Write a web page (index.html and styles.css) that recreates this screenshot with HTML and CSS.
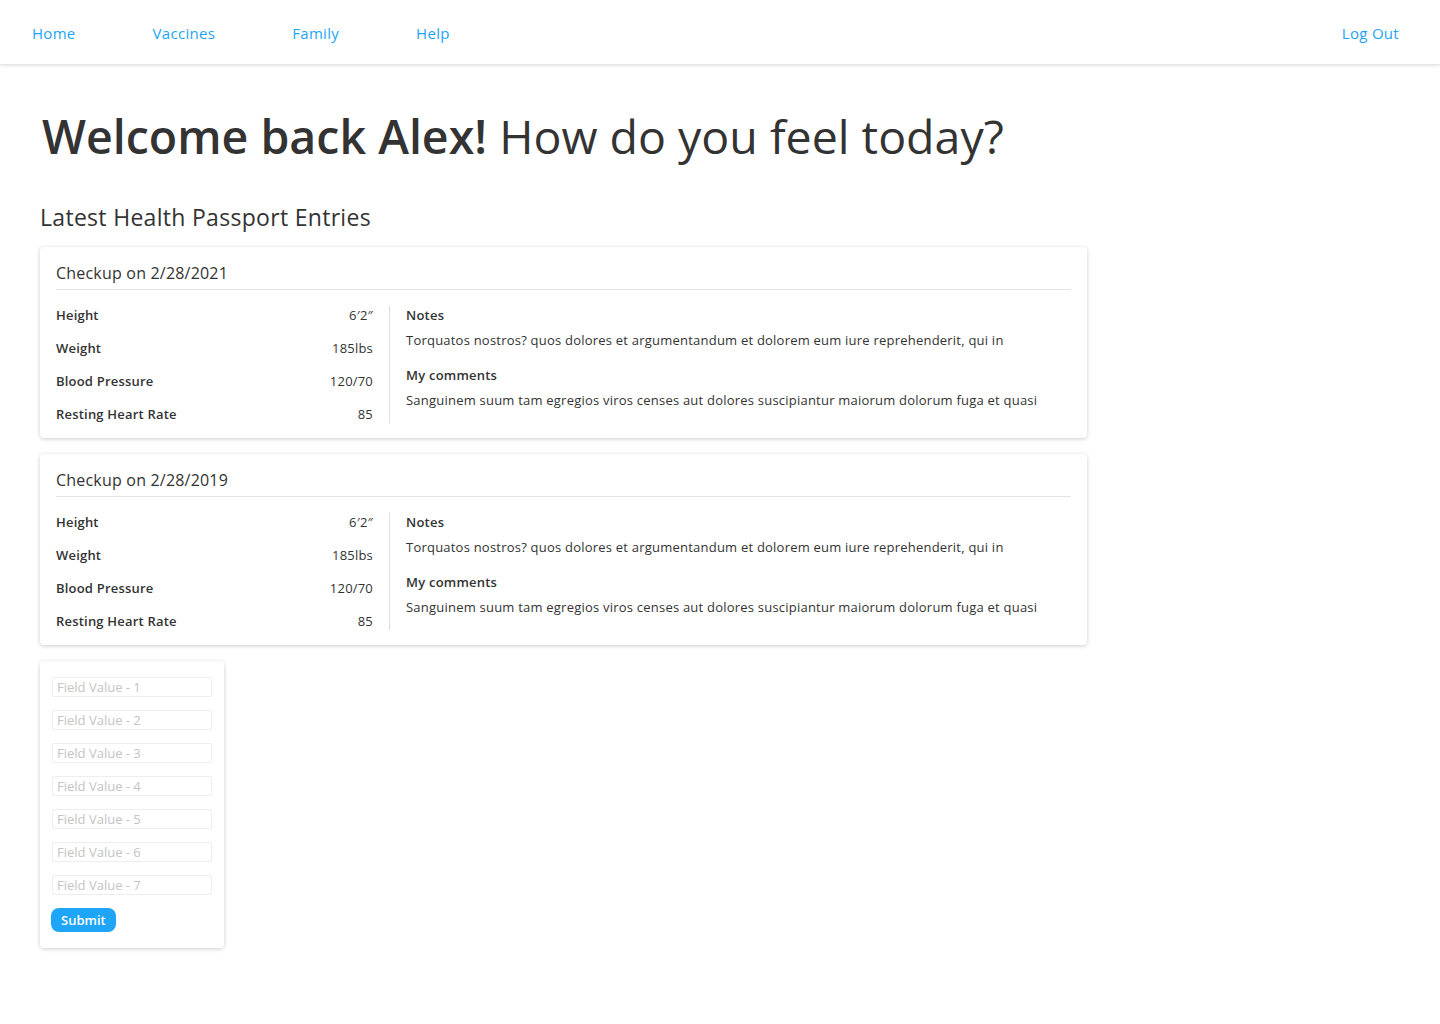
FILE: index.html
```html
<!DOCTYPE html>
<html>
<head>
<meta charset="utf-8">
<link rel="stylesheet" href="styles.css">
</head>
<body>
<nav class="nav">
  <div class="nav-links">
    <a class="nav-link" href="#">Home</a>
    <a class="nav-link" href="#">Vaccines</a>
    <a class="nav-link" href="#">Family</a>
    <a class="nav-link" href="#">Help</a>
  </div>
  <a class="nav-link" href="#">Log Out</a>
</nav>
<main class="main">
  <h1 class="welcome"><strong>Welcome back Alex!</strong> How do you feel today?</h1>
  <h2 class="section-title">Latest Health Passport Entries</h2>

  <section class="card entry">
    <h3 class="entry-title">Checkup on 2/28/2021</h3>
    <div class="entry-body">
      <div class="stats">
        <div class="stat"><span class="stat-label">Height</span><span class="stat-value">6′2″</span></div>
        <div class="stat"><span class="stat-label">Weight</span><span class="stat-value">185lbs</span></div>
        <div class="stat"><span class="stat-label">Blood Pressure</span><span class="stat-value">120/70</span></div>
        <div class="stat"><span class="stat-label">Resting Heart Rate</span><span class="stat-value">85</span></div>
      </div>
      <div class="notes">
        <div class="note-label">Notes</div>
        <div class="note-text">Torquatos nostros? quos dolores et argumentandum et dolorem eum iure reprehenderit, qui in</div>
        <div class="note-label second">My comments</div>
        <div class="note-text">Sanguinem suum tam egregios viros censes aut dolores suscipiantur maiorum dolorum fuga et quasi</div>
      </div>
    </div>
  </section>

  <section class="card entry">
    <h3 class="entry-title">Checkup on 2/28/2019</h3>
    <div class="entry-body">
      <div class="stats">
        <div class="stat"><span class="stat-label">Height</span><span class="stat-value">6′2″</span></div>
        <div class="stat"><span class="stat-label">Weight</span><span class="stat-value">185lbs</span></div>
        <div class="stat"><span class="stat-label">Blood Pressure</span><span class="stat-value">120/70</span></div>
        <div class="stat"><span class="stat-label">Resting Heart Rate</span><span class="stat-value">85</span></div>
      </div>
      <div class="notes">
        <div class="note-label">Notes</div>
        <div class="note-text">Torquatos nostros? quos dolores et argumentandum et dolorem eum iure reprehenderit, qui in</div>
        <div class="note-label second">My comments</div>
        <div class="note-text">Sanguinem suum tam egregios viros censes aut dolores suscipiantur maiorum dolorum fuga et quasi</div>
      </div>
    </div>
  </section>

  <form class="card form">
    <input class="field" type="text" placeholder="Field Value - 1">
    <input class="field" type="text" placeholder="Field Value - 2">
    <input class="field" type="text" placeholder="Field Value - 3">
    <input class="field" type="text" placeholder="Field Value - 4">
    <input class="field" type="text" placeholder="Field Value - 5">
    <input class="field" type="text" placeholder="Field Value - 6">
    <input class="field" type="text" placeholder="Field Value - 7">
    <button class="submit" type="button">Submit</button>
  </form>
</main>
</body>
</html>
```
FILE: styles.css
```css
* { box-sizing: border-box; }
body {
  margin: 0;
  font-family: "Open Sans", "Liberation Sans", sans-serif;
  color: #333;
  background: #fff;
}
.nav {
  height: 64px;
  display: flex;
  align-items: center;
  justify-content: space-between;
  padding: 1px 41px 0 32px;
  box-shadow: 0 1px 4px rgba(0,0,0,0.18);
}
.nav-links { display: flex; gap: 77px; }
.nav-link {
  color: #1ea5f7;
  text-decoration: none;
  font-size: 15px;
  font-weight: 500;
  letter-spacing: 0.3px;
}
.main { padding: 44px 40px 60px; }
.welcome {
  margin: 0 0 0 2px;
  font-size: 46.5px;
  font-weight: 400;
  letter-spacing: 0;
  color: #333;
  line-height: 56px;
}
.welcome strong { font-weight: 600; }
.section-title {
  margin: 38px 0 15px;
  font-size: 23px;
  font-weight: 400;
  line-height: 30px;
  letter-spacing: 0.3px;
  color: #333;
}
.card {
  background: #fff;
  border-radius: 4px;
  box-shadow: 0 1px 4px rgba(0,0,0,0.2);
}
.entry {
  width: 1047px;
  padding: 14px 16px 15px;
  margin-bottom: 16px;
}
.entry-title {
  margin: 0;
  font-size: 16px;
  font-weight: 500;
  line-height: 24px;
  padding-bottom: 4px;
  letter-spacing: 0.2px;
  border-bottom: 1px solid #e3e3e3;
}
.entry-body { display: flex; padding-top: 16px; }
.stats {
  width: 334px;
  padding-right: 16px;
  border-right: 1px solid #ddd;
  display: flex;
  flex-direction: column;
}
.stat {
  display: flex;
  justify-content: space-between;
  font-size: 13px;
  line-height: 18px;
  margin-bottom: 15px;
  letter-spacing: 0.2px;
}
.stat:last-child { margin-bottom: 0; }
.stat-label { font-weight: 600; }
.notes { padding-left: 16px; font-size: 13px; line-height: 18px; letter-spacing: 0.22px; }
.note-label { font-weight: 600; }
.note-label.second { margin-top: 17px; }
.note-text { margin-top: 7px; }
.form {
  width: 184px;
  margin-top: 1px;
  padding: 16px 12px 16px 12px;
  display: flex;
  flex-direction: column;
  gap: 13px;
}
.field {
  width: 160px;
  height: 20px;
  border: 1px solid #eee;
  border-radius: 2px;
  padding: 0 4px;
  font-family: inherit;
  font-size: 13px;
  color: #333;
}
.field::placeholder { color: #c4c4c4; }
.submit {
  align-self: flex-start;
  margin-top: 0;
  margin-left: -1px;
  height: 24px;
  padding: 0 10px;
  border: none;
  border-radius: 8px;
  background: #1ea5f7;
  color: #fff;
  font-family: inherit;
  font-size: 13px;
  font-weight: 600;
}
```
